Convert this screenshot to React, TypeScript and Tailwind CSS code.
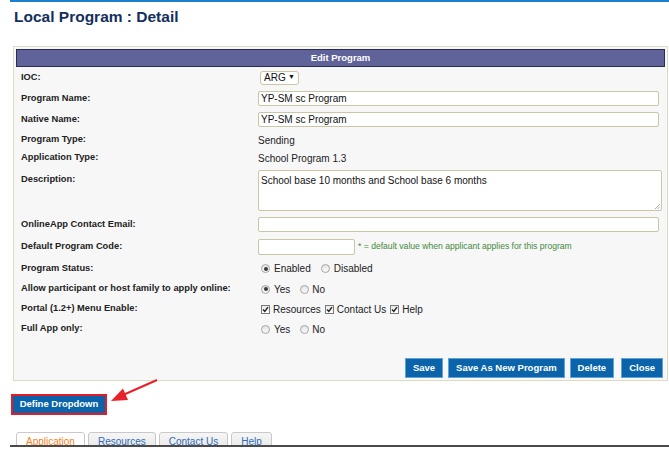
import type { ReactNode } from 'react';

function Radio({ checked }: { checked?: boolean }) {
  return (
    <span className="w-[9px] h-[9px] rounded-full border border-[#a4a4a4] bg-gradient-to-b from-[#e4e4e4] to-[#fafafa] flex items-center justify-center shrink-0">
      {checked && <span className="w-[4px] h-[4px] rounded-full bg-[#3a3a3a]" />}
    </span>
  );
}

function Check() {
  return (
    <span className="w-[9px] h-[9px] border border-[#7a7a7a] bg-gradient-to-b from-[#e8e8e8] to-white flex items-center justify-center shrink-0">
      <svg width="7" height="7" viewBox="0 0 7 7">
        <path d="M1 3.6 L2.8 5.4 L6 1.2" fill="none" stroke="#222" strokeWidth="1.4" />
      </svg>
    </span>
  );
}

function Row({ label, h, children, top }: { label: string; h: string; children?: ReactNode; top?: boolean }) {
  return (
    <div className={`flex ${top ? 'items-start' : 'items-center'} ${h}`}>
      <div className={`w-[242px] pl-[5px] font-bold text-[9.3px] text-[#222] ${top ? 'pt-[7px]' : ''}`}>{label}</div>
      <div className="flex-1 flex items-center">{children}</div>
    </div>
  );
}

function BlueButton({ children, className = '' }: { children: ReactNode; className?: string }) {
  return (
    <div className={`h-[20px] px-[7px] bg-[#0b64a9] border border-[#5ea3dc] text-white font-bold text-[9.5px] flex items-center ${className}`}>
      {children}
    </div>
  );
}

const inputCls = 'h-[15px] bg-white border border-[#cbc6a6] rounded-[2px] text-[10px] text-[#111] pl-[2px] flex items-center';

export default function App() {
  const tabs = ['Application', 'Resources', 'Contact Us', 'Help'];

  return (
    <div className="relative w-[669px] h-[454px] bg-white overflow-hidden font-['Liberation_Sans',Arial,sans-serif]">
      <div className="ml-[10px] h-[2px] bg-[#1c7fcb]" />
      <h1 className="ml-[14px] mt-[5px] text-[15.5px] leading-[20px] font-bold text-[#142f5d]">Local Program : Detail</h1>

      {/* edit panel */}
      <div className="mt-[19px] ml-[13px] w-[655px] border border-[#dcdcc4] bg-[#f7f7f7] p-[2px]">
        <div className="h-[18px] bg-[#5f6399] border border-[#2c2c4c] flex items-center justify-center text-white font-bold text-[9.5px]">
          Edit Program
        </div>

        <Row label="IOC:" h="h-[21px]">
          <div className="ml-[2px] h-[14px] w-[39px] border border-[#cbc6a6] rounded-[3px] bg-white flex items-center justify-between px-[3px] text-[10px] text-[#111]">
            <span>ARG</span>
            <span className="text-[7px]">▼</span>
          </div>
        </Row>
        <Row label="Program Name:" h="h-[21px]">
          <div className={`${inputCls} w-[401px]`}>YP-SM sc Program</div>
        </Row>
        <Row label="Native Name:" h="h-[21px]">
          <div className={`${inputCls} w-[401px]`}>YP-SM sc Program</div>
        </Row>
        <Row label="Program Type:" h="h-[20px]">
          <span className="text-[10px] text-[#222]">Sending</span>
        </Row>
        <Row label="Application Type:" h="h-[16px]">
          <span className="text-[10px] text-[#222]">School Program 1.3</span>
        </Row>
        <Row label="Description:" h="h-[48px]" top>
          <div className="relative mt-[4px] h-[41px] w-[404px] bg-white border border-[#cbc6a6] rounded-[2px] text-[10px] text-[#111] pl-[2px] pt-[2px]">
            School base 10 months and School base 6 months
            <svg className="absolute right-[1px] bottom-[1px]" width="6" height="6" viewBox="0 0 6 6">
              <path d="M1 6 L6 1 M3.5 6 L6 3.5" stroke="#999" strokeWidth="0.8" />
            </svg>
          </div>
        </Row>
        <Row label="OnlineApp Contact Email:" h="h-[21px]">
          <div className={`${inputCls} w-[401px]`} />
        </Row>
        <Row label="Default Program Code:" h="h-[23px]">
          <div className={`${inputCls} h-[16px] w-[97px]`} />
          <span className="ml-[3px] text-[8.6px] text-[#3f8a3c]">* = default value when applicant applies for this program</span>
        </Row>
        <Row label="Program Status:" h="h-[21px]">
          <div className="flex items-center text-[10px] text-[#222] pl-[3px]">
            <Radio checked />
            <span className="ml-[4px]">Enabled</span>
            <span className="ml-[10px]"><Radio /></span>
            <span className="ml-[4px]">Disabled</span>
          </div>
        </Row>
        <Row label="Allow participant or host family to apply online:" h="h-[20px]">
          <div className="flex items-center text-[10px] text-[#222] pl-[3px]">
            <Radio checked />
            <span className="ml-[4px]">Yes</span>
            <span className="ml-[10px]"><Radio /></span>
            <span className="ml-[3px]">No</span>
          </div>
        </Row>
        <Row label="Portal (1.2+) Menu Enable:" h="h-[20px]">
          <div className="flex items-center text-[10px] text-[#222] pl-[3px]">
            <Check />
            <span className="ml-[3px]">Resources</span>
            <span className="ml-[4px]"><Check /></span>
            <span className="ml-[3px]">Contact Us</span>
            <span className="ml-[4px]"><Check /></span>
            <span className="ml-[3px]">Help</span>
          </div>
        </Row>
        <Row label="Full App only:" h="h-[20px]">
          <div className="flex items-center text-[10px] text-[#222] pl-[3px]">
            <Radio />
            <span className="ml-[4px]">Yes</span>
            <span className="ml-[10px]"><Radio /></span>
            <span className="ml-[3px]">No</span>
          </div>
        </Row>

        <div className="mt-[19px] flex items-center justify-end gap-[5px] pr-[2px]">
          <BlueButton>Save</BlueButton>
          <BlueButton>Save As New Program</BlueButton>
          <BlueButton>Delete</BlueButton>
          <BlueButton className="ml-[2px]">Close</BlueButton>
        </div>
      </div>

      {/* define dropdown */}
      <div className="mt-[13px] ml-[11px] w-fit border-2 border-[#e31d27]">
        <div className="h-[17px] w-[92px] bg-[#0b64a9] text-white font-bold text-[9.5px] flex items-center justify-center">
          Define Dropdown
        </div>
      </div>

      {/* tabs */}
      <div className="mt-[17px] ml-[10px] flex flex-col">
        <div className="flex gap-[3px] pl-[6px] h-[13px] overflow-hidden">
          {tabs.map((t, i) => (
            <div
              key={t}
              className={`h-[20px] px-[9px] border border-[#c9c9c9] rounded-t-[3px] text-[10px] leading-[12px] pt-[3px] ${
                i === 0 ? 'bg-white text-[#f5821f]' : 'bg-gradient-to-b from-[#f6f6f6] to-[#e6e6e6] text-[#2f6cb3]'
              }`}
            >
              {t}
            </div>
          ))}
        </div>
        <div className="h-[2px] bg-[#4a4a4a]" />
      </div>

      {/* annotation arrow */}
      <svg className="absolute left-[108px] top-[376px]" width="54" height="30" viewBox="0 0 54 30">
        <line x1="15" y1="19" x2="49" y2="4" stroke="#e8202a" strokeWidth="2" />
        <polygon points="3,25 20,24 15,12.5" fill="#e8202a" />
      </svg>
    </div>
  );
}
